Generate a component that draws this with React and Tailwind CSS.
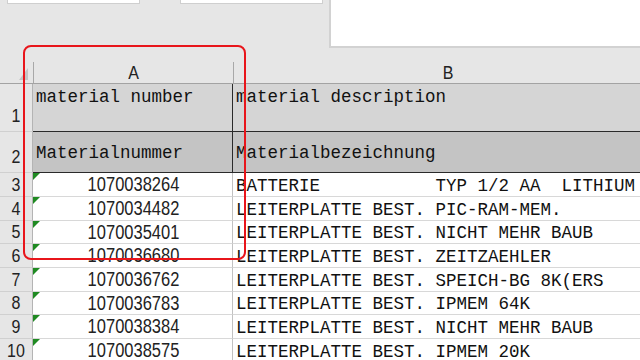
import React from "react";

const MONO = "font-['Liberation_Mono','Courier_New',monospace]";
const SANS = "font-['Liberation_Sans',Arial,sans-serif]";

const rows = [
  ["3", "1070038264", "BATTERIE" + " ".repeat(11) + "TYP 1/2 AA  LITHIUM", "h-[24px]"],
  ["4", "1070034482", "LEITERPLATTE BEST. PIC-RAM-MEM.", "h-[24px]"],
  ["5", "1070035401", "LEITERPLATTE BEST. NICHT MEHR BAUB", "h-[23px]"],
  ["6", "1070036680", "LEITERPLATTE BEST. ZEITZAEHLER", "h-[24px]"],
  ["7", "1070036762", "LEITERPLATTE BEST. SPEICH-BG 8K(ERS", "h-[24px]"],
  ["8", "1070036783", "LEITERPLATTE BEST. IPMEM 64K", "h-[23px]"],
  ["9", "1070038384", "LEITERPLATTE BEST. NICHT MEHR BAUB", "h-[24px]"],
  ["10", "1070038575", "LEITERPLATTE BEST. IPMEM 20K", "h-[24px]"],
];

function GreenTri() {
  return (
    <svg className="absolute left-0 top-0" width="7" height="7" viewBox="0 0 7 7">
      <polygon points="0,0 7,0 0,7" fill="#1f8a22" />
    </svg>
  );
}

export default function App() {
  return (
    <div className={`relative w-[640px] h-[360px] overflow-hidden bg-[#e6e6e6] ${SANS}`}>
      {/* top toolbar area */}
      <div className="flex h-[48px] items-start">
        <div className="ml-[7px] w-[133px] h-[4px] bg-white border border-t-0 border-[#cfcfcf]" />
        <div className="ml-[40px] w-[143px] h-[4px] bg-white border border-t-0 border-[#cfcfcf]" />
        <div className="ml-[6px] flex-1 h-[48px] bg-white border-l-2 border-b-2 border-[#d2d2d2]" />
      </div>

      {/* column header row */}
      <div className="flex h-[36px] items-end border-b border-[#a3a3a3]">
        <div className="relative w-[33px] h-full">
          <svg className="absolute left-[19px] top-[20px]" width="9" height="12" viewBox="0 0 9 12">
            <polygon points="9,0 9,12 0,12" fill="#c4c4c4" />
          </svg>
        </div>
        <div className="w-px h-[21px] bg-[#a8a8a8]" />
        <div className="w-[199px] h-[21px] flex items-center justify-center text-[16px] text-[#222]">
          <span className="inline-block scale-y-[1.15]">A</span>
        </div>
        <div className="w-px h-[21px] bg-[#a8a8a8]" />
        <div className="flex-1 h-[21px] flex items-center justify-center text-[16px] text-[#222] pr-[2px]">
          <span className="inline-block scale-y-[1.15] ml-[24px]">B</span>
        </div>
      </div>

      {/* row 1 */}
      <div className="flex h-[48px]">
        <div className="w-[33px] border-r border-b border-r-[#b4b4b4] border-b-[#d0d0d0] flex items-end justify-center pb-[3px] text-[16px] text-[#222]">
          <span className="inline-block scale-y-[1.15]">1</span>
        </div>
        <div className={`w-[200px] bg-[#d5d5d5] border-r border-b border-[#2a2a2a] pl-[3px] pt-[2px] ${MONO} text-[17.5px] leading-[20px] text-[#111]`}>
          <span className="inline-block scale-y-[1.1] whitespace-pre">material number</span>
        </div>
        <div className={`flex-1 bg-[#d5d5d5] border-b border-[#2a2a2a] pl-[3px] pt-[2px] ${MONO} text-[17.5px] leading-[20px] text-[#111]`}>
          <span className="inline-block scale-y-[1.1] whitespace-pre">material description</span>
        </div>
      </div>

      {/* row 2 */}
      <div className="flex h-[41px]">
        <div className="w-[33px] border-r border-b border-r-[#b4b4b4] border-b-[#d0d0d0] flex items-end justify-center pb-[3px] text-[16px] text-[#222]">
          <span className="inline-block scale-y-[1.15]">2</span>
        </div>
        <div className={`w-[200px] bg-[#c4c4c4] border-r border-b border-[#2a2a2a] pl-[3px] flex items-center ${MONO} text-[17.5px] leading-[20px] text-[#111]`}>
          <span className="inline-block scale-y-[1.1] whitespace-pre">Materialnummer</span>
        </div>
        <div className={`flex-1 bg-[#c4c4c4] border-b border-[#2a2a2a] pl-[3px] flex items-center ${MONO} text-[17.5px] leading-[20px] text-[#111]`}>
          <span className="inline-block scale-y-[1.1] whitespace-pre">Materialbezeichnung</span>
        </div>
      </div>

      {/* data rows */}
      {rows.map(([n, num, desc, h]) => (
        <div key={n} className={`flex ${h}`}>
          <div className="w-[33px] border-r border-b border-r-[#b4b4b4] border-b-[#d0d0d0] flex items-center justify-center text-[16px] text-[#222]">
            <span className="inline-block scale-y-[1.15]">{n}</span>
          </div>
          <div className="relative w-[200px] bg-white border-r border-b border-r-[#c2c2c2] border-b-[#d8d8d8] flex items-center justify-center text-[16.5px] text-[#222]">
            <GreenTri />
            <span className="inline-block scale-y-[1.18] pl-[2px]">{num}</span>
          </div>
          <div className={`flex-1 bg-white border-b border-[#d8d8d8] pl-[3px] flex items-center overflow-hidden ${MONO} text-[17.5px] leading-[20px] text-[#111]`}>
            <span className="inline-block scale-y-[1.1] whitespace-pre">{desc}</span>
          </div>
        </div>
      ))}

      {/* red highlight overlay */}
      <div className="absolute left-[23px] top-[45px] w-[223px] h-[215px] border-[2.5px] border-[#e8151b] rounded-[8px] pointer-events-none" />
    </div>
  );
}
